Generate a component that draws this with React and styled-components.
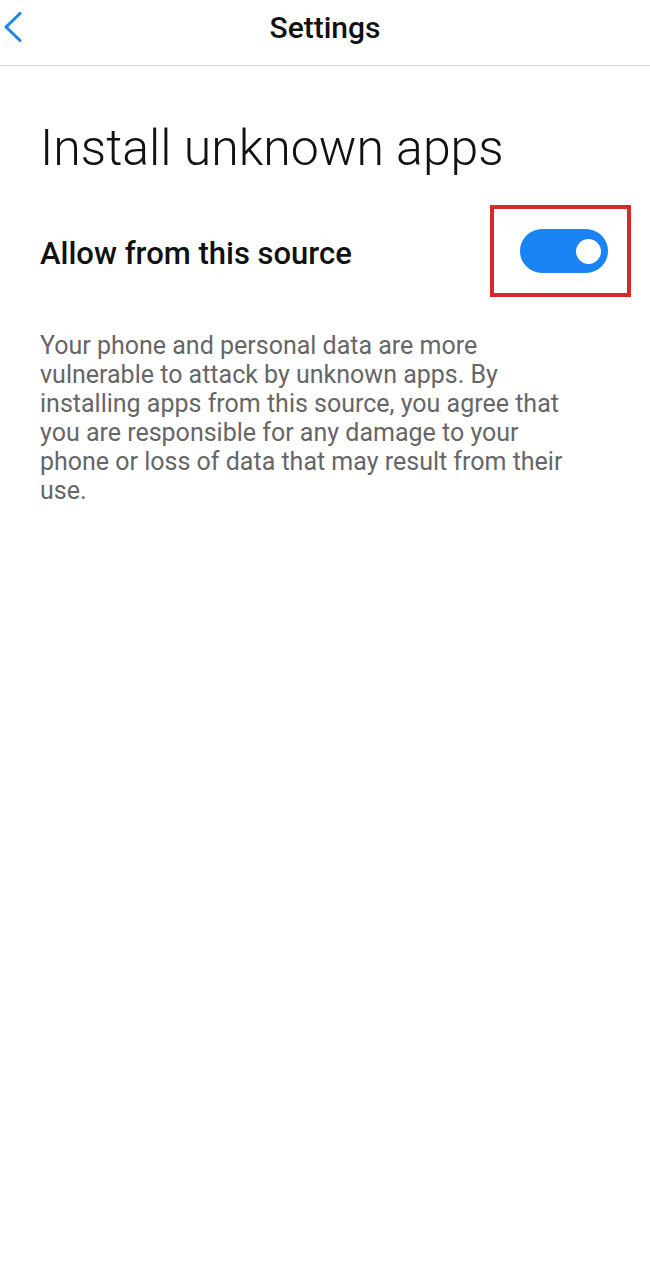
import React, { useState } from 'react';
import styled, { createGlobalStyle } from 'styled-components';

const GlobalStyle = createGlobalStyle`
  body {
    margin: 0;
    background: #ffffff;
    font-family: Roboto, 'Noto Sans', sans-serif;
  }
`;

function SettingsScreen() {
  const [allowed, setAllowed] = useState(true);

  return (
    <Screen>
      <GlobalStyle />
      <Header>
        <BackButton aria-label="Back">
          <svg width="20" height="30" viewBox="0 0 20 30" fill="none">
            <path d="M17 1.5 L3 15 L17 28.5" stroke="#1a84f2" strokeWidth="3" strokeLinecap="round" strokeLinejoin="round" />
          </svg>
        </BackButton>
        <HeaderTitle>Settings</HeaderTitle>
      </Header>
      <Content>
        <PageTitle>Install unknown apps</PageTitle>
        <OptionRow>
          <OptionLabel>Allow from this source</OptionLabel>
          <Highlight>
            <Toggle $on={allowed} onClick={() => setAllowed(!allowed)} aria-pressed={allowed}>
              <Knob $on={allowed} />
            </Toggle>
          </Highlight>
        </OptionRow>
        <Description>
          Your phone and personal data are more vulnerable to attack by unknown apps. By
          installing apps from this source, you agree that you are responsible for any damage
          to your phone or loss of data that may result from their use.
        </Description>
      </Content>
    </Screen>
  );
}

const Screen = styled.div`
  width: 650px;
  min-height: 1280px;
  background: #fff;
`;

const Header = styled.header`
  position: relative;
  height: 66px;
  display: flex;
  align-items: center;
  justify-content: center;
  border-bottom: 1.5px solid #d6d6d6;
  box-sizing: border-box;
  padding-bottom: 10px;
`;

const BackButton = styled.button`
  position: absolute;
  left: 3px;
  top: 12px;
  padding: 0;
  border: none;
  background: none;
  display: flex;
`;

const HeaderTitle = styled.h1`
  margin: 0;
  font-size: 30px;
  font-weight: 500;
  color: #111;
`;

const Content = styled.main`
  padding: 49px 19px 0 40px;
`;

const PageTitle = styled.h2`
  margin: 0;
  font-size: 50px;
  font-weight: 300;
  color: #111;
  line-height: 66px;
`;

const OptionRow = styled.div`
  display: flex;
  align-items: center;
  justify-content: space-between;
  margin-top: 24px;
`;

const OptionLabel = styled.span`
  font-size: 31px;
  font-weight: 500;
  color: #111;
  padding-top: 4px;
`;

const Highlight = styled.div`
  border: 4px solid #d42a2a;
  padding: 20px 19px 20px 26px;
  display: flex;
`;

const Toggle = styled.button`
  width: 88px;
  height: 44px;
  border-radius: 22px;
  border: none;
  padding: 0 7px;
  background: ${p => (p.$on ? '#1a84f5' : '#c8c8c8')};
  display: flex;
  align-items: center;
  justify-content: ${p => (p.$on ? 'flex-end' : 'flex-start')};
  cursor: pointer;
`;

const Knob = styled.span`
  width: 25px;
  height: 25px;
  border-radius: 50%;
  background: #fff;
`;

const Description = styled.p`
  margin: 34px 0 0;
  max-width: 530px;
  font-size: 25px;
  line-height: 29px;
  color: #666;
`;

export default function App() {
  return <SettingsScreen />;
}
